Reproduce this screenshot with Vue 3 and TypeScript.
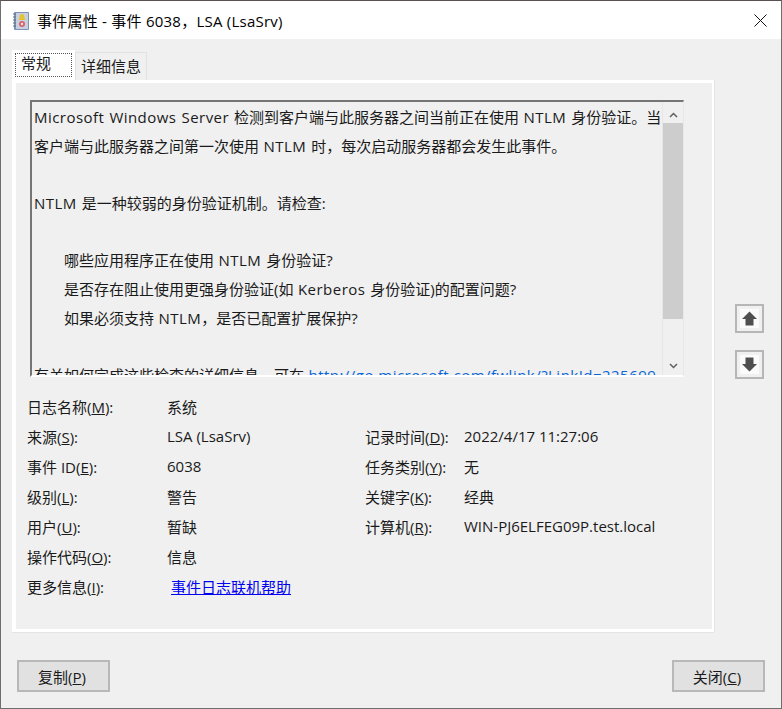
<script setup lang="ts">
interface Field { label: string; key: string; value: string }
const leftRows: Field[] = [
  { label: '日志名称(', key: 'M', value: '系统' },
  { label: '来源(', key: 'S', value: 'LSA (LsaSrv)' },
  { label: '事件 ID(', key: 'E', value: '6038' },
  { label: '级别(', key: 'L', value: '警告' },
  { label: '用户(', key: 'U', value: '暂缺' },
  { label: '操作代码(', key: 'O', value: '信息' },
]
const rightRows: (Field | null)[] = [
  null,
  { label: '记录时间(', key: 'D', value: '2022/4/17 11:27:06' },
  { label: '任务类别(', key: 'Y', value: '无' },
  { label: '关键字(', key: 'K', value: '经典' },
  { label: '计算机(', key: 'R', value: 'WIN-PJ6ELFEG09P.test.local' },
  null,
]
</script>

<template>
  <div class="window">
    <header class="titlebar">
      <svg class="app-icon" width="18" height="19" viewBox="0 0 18 19">
        <rect x="2" y="1" width="15" height="18" rx="1" fill="#7d93b5" />
        <rect x="4" y="2" width="12" height="16" fill="#c6d0e0" />
        <path d="M1 3h3M1 6h3M1 9h3M1 12h3M1 15h3" stroke="#66707f" stroke-width="1" />
        <path d="M10 3c-2 0-2.500 2-2.500 4L6.500 9h7l-1-2c0-2-.5-4-2.500-4z" fill="#e6c22c" />
        <circle cx="10" cy="13" r="3" fill="#d9636a" />
        <circle cx="10" cy="13" r="1.200" fill="#f6dcdc" />
      </svg>
      <span class="title">事件属性 - 事件 6038，LSA (LsaSrv)</span>
      <svg class="close" width="13" height="13" viewBox="0 0 13 13">
        <path d="M.5.5l12 12M12.500.5l-12 12" stroke="#111" stroke-width="1" fill="none" />
      </svg>
    </header>

    <main class="body">
      <div class="tabs">
        <div class="tab active"><span class="focus">常规</span></div>
        <div class="tab">详细信息</div>
      </div>

      <section class="panel">
        <div class="textbox">
          <div class="text">
            <div><span class="lat">Microsoft Windows Server </span>检测到客户端与此服务器之间当前正在使用 <span class="lat">NTLM </span>身份验证。当</div>
            <div>客户端与此服务器之间第一次使用 <span class="lat">NTLM </span>时，每次启动服务器都会发生此事件。</div>
            <div class="blank"></div>
            <div><span class="lat">NTLM </span>是一种较弱的身份验证机制。请检查:</div>
            <div class="blank"></div>
            <div class="indent">哪些应用程序正在使用 <span class="lat">NTLM </span>身份验证?</div>
            <div class="indent">是否存在阻止使用更强身份验证(如 <span class="lat">Kerberos </span>身份验证)的配置问题?</div>
            <div class="indent">如果必须支持 <span class="lat">NTLM</span>，是否已配置扩展保护?</div>
            <div class="blank"></div>
            <div>有关如何完成这些检查的详细信息，可在 <span class="url lat">http://go.microsoft.com/fwlink/?LinkId=225699</span></div>
          </div>
          <div class="scrollbar">
            <svg width="9" height="6" viewBox="0 0 9 6"><path d="M1 5l3.500-3.500L8 5" stroke="#606060" stroke-width="1.500" fill="none" /></svg>
            <div class="track"><div class="thumb"></div></div>
            <svg width="9" height="6" viewBox="0 0 9 6"><path d="M1 1l3.500 3.500L8 1" stroke="#606060" stroke-width="1.500" fill="none" /></svg>
          </div>
        </div>

        <div class="fields">
          <div class="column">
            <div v-for="row in leftRows" :key="row.key" class="row">
              <span class="label">{{ row.label }}<u>{{ row.key }}</u>):</span>
              <span class="value">{{ row.value }}</span>
            </div>
            <div class="row">
              <span class="label">更多信息(<u>I</u>):</span>
              <a class="help">事件日志联机帮助</a>
            </div>
          </div>
          <div class="column right">
            <div v-for="(row, i) in rightRows" :key="i" class="row">
              <template v-if="row">
                <span class="label">{{ row.label }}<u>{{ row.key }}</u>):</span>
                <span class="value">{{ row.value }}</span>
              </template>
            </div>
          </div>
        </div>
      </section>

      <aside class="nav">
        <button class="nav-btn" aria-label="上一个">
          <svg width="19" height="19" viewBox="0 0 19 19"><path d="M9.500 2.500L17 10h-3.500v6.500h-8V10H2z" fill="#4f4f4f" /></svg>
        </button>
        <button class="nav-btn" aria-label="下一个">
          <svg width="19" height="19" viewBox="0 0 19 19"><path d="M9.500 16.500L2 9h3.500V2.500h8V9H17z" fill="#4f4f4f" /></svg>
        </button>
      </aside>

      <footer class="actions">
        <button class="btn">复制(<u>P</u>)</button>
        <button class="btn">关闭(<u>C</u>)</button>
      </footer>
    </main>
  </div>
</template>

<style scoped>
.window {
  width: 782px;
  height: 709px;
  box-sizing: border-box;
  border: 1px solid #6e6e6e;
  border-top-color: #5a5050;
  display: flex;
  flex-direction: column;
  font-family: "Open Sans", "Noto Sans CJK SC", sans-serif;
  font-size: 15px;
  color: #1a1a1a;
  background: #f0f0f0;
  overflow: hidden;
}
.titlebar {
  height: 38px;
  flex: none;
  background: #fff;
  display: flex;
  align-items: center;
  padding: 0 14px 0 11px;
  gap: 7px;
}
.title { font-size: 15px; letter-spacing: 0.240px; color: #000; flex: 1; }
.body {
  position: relative;
  flex: 1;
  padding: 11px 0 0 11px;
  display: grid;
  grid-template-columns: 702px 1fr;
  grid-template-rows: 30px 552px 1fr;
}
.tabs { display: flex; grid-column: 1 / 3; align-items: flex-end; position: relative; z-index: 1; }
.tab {
  height: 28px;
  width: 72px;
  box-sizing: border-box;
  border: 1px solid #e2e2e2;
  border-bottom: 0;
  text-align: center;
  line-height: 26px;
  background: #f0f0f0;
}
.tab.active {
  width: 63px;
  height: 32px;
  background: #fff;
  padding: 3px;
  text-align: left;
  border: 0;
  margin-bottom: -2px;
}
.focus {
  display: block;
  width: 57px;
  height: 24px;
  box-sizing: border-box;
  border: 1px dotted #555;
  background: #fff;
  padding-left: 5px;
  line-height: 18px;
}
.panel {
  grid-column: 1;
  box-sizing: border-box;
  border-style: solid;
  border-color: #fff;
  border-width: 3px 2px 3px 4px;
  box-shadow: 1px 0 0 #e4e4e4, 0 1px 0 #e4e4e4;
  padding: 17px 0 0 14px;
  height: 552px;
}
.textbox {
  width: 654px;
  height: 277px;
  box-sizing: border-box;
  border: 2px solid #757575;
  border-right: 1px solid #e8e8e8;
  border-bottom: 2px solid #fff;
  display: flex;
  overflow: hidden;
}
.text {
  flex: 1;
  min-width: 0;
  padding: 1px 0 0 2px;
  line-height: 28.700px;
  white-space: nowrap;
  overflow: hidden;
  word-spacing: 0.600px;
}
.lat { letter-spacing: 0.470px; }
.blank { height: 28.700px; }
.indent { padding-left: 30px; }
.url { color: #0a66d6; }
.scrollbar {
  width: 21px;
  flex: none;
  display: flex;
  flex-direction: column;
  align-items: center;
  border-left: 1px solid #e6e6e6;
  padding: 10px 0 6px;
  box-sizing: border-box;
}
.track { flex: 1; width: 100%; margin: 5px 0 30px; }
.thumb { width: 100%; height: 196px; background: #cdcdcd; }
.fields {
  display: grid;
  grid-template-columns: 338px 1fr;
  padding: 14px 0 0 0;
  margin-left: -3px;
}
.row {
  height: 30px;
  display: flex;
  align-items: center;
}
.label { width: 140px; flex: none; }
.right .label { width: 99px; }
.help { margin-left: 4px; color: #0000f0; text-decoration: underline; }
.nav {
  position: absolute;
  right: 17px;
  top: 265px;
  display: flex;
  flex-direction: column;
  gap: 17px;
}
.nav-btn {
  width: 29px;
  height: 29px;
  padding: 0;
  border: 2px solid #b6b6b6;
  background: #f0f0f0;
  display: flex;
  align-items: center;
  justify-content: center;
}
.nav-btn svg { background: #fbfbfb; }
.actions {
  grid-column: 1 / 3;
  display: flex;
  justify-content: space-between;
  padding: 28px 16px 0 5px;
  align-self: start;
}
.btn {
  width: 93px;
  height: 32px;
  border: 2px solid #b8b8b8;
  background: #e1e1e1;
  font: inherit;
  color: #1a1a1a;
  padding: 0 3px 0 0;
}
</style>

<style>
html, body { margin: 0; background: #f0f0f0; }
</style>
